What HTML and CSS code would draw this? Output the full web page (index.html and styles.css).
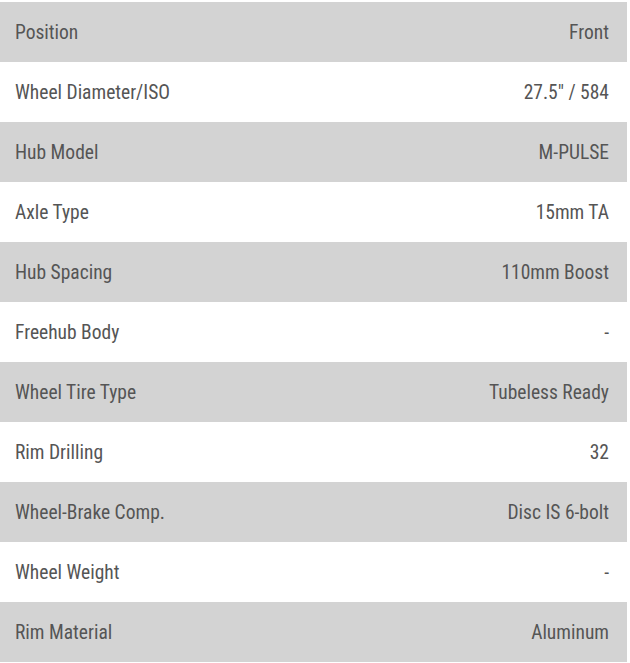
FILE: index.html
```html
<!DOCTYPE html>
<html>
<head>
<meta charset="utf-8">
<link rel="stylesheet" href="styles.css">
</head>
<body>
<div class="specs">
  <div class="row"><span>Position</span><span>Front</span></div>
  <div class="row"><span>Wheel Diameter/ISO</span><span>27.5" / 584</span></div>
  <div class="row"><span>Hub Model</span><span>M-PULSE</span></div>
  <div class="row"><span>Axle Type</span><span>15mm TA</span></div>
  <div class="row"><span>Hub Spacing</span><span>110mm Boost</span></div>
  <div class="row"><span>Freehub Body</span><span>-</span></div>
  <div class="row"><span>Wheel Tire Type</span><span>Tubeless Ready</span></div>
  <div class="row"><span>Rim Drilling</span><span>32</span></div>
  <div class="row"><span>Wheel-Brake Comp.</span><span>Disc IS 6-bolt</span></div>
  <div class="row"><span>Wheel Weight</span><span>-</span></div>
  <div class="row"><span>Rim Material</span><span>Aluminum</span></div>
</div>
</body>
</html>
```
FILE: styles.css
```css
html, body {
  margin: 0;
  padding: 0;
  background: #fff;
}
.specs {
  padding-top: 2px;
  width: 627px;
  font-family: "Roboto Condensed", Roboto, "Noto Sans", sans-serif;
  font-stretch: condensed;
  font-size: 19.5px;
  color: #555;
}
.row {
  display: flex;
  justify-content: space-between;
  align-items: center;
  height: 60px;
  padding: 0 18px 0 15px;
  box-sizing: border-box;
}
.row:nth-child(odd) {
  background: #d3d3d3;
}
```
